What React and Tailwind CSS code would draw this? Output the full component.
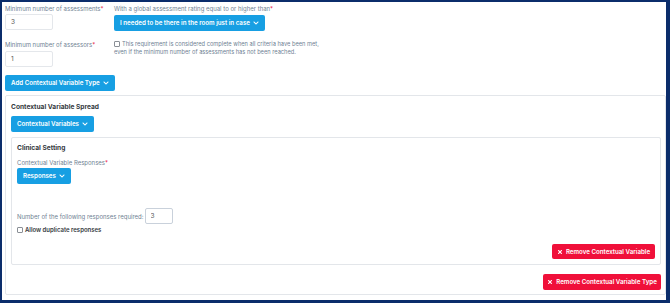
import { FaChevronDown, FaTimes } from 'react-icons/fa';

const BlueButton = ({ children, className = '' }) => (
    <button className={`flex items-center gap-[3px] bg-[#179fe3] text-white font-semibold text-[6.2px] whitespace-nowrap rounded-[2px] h-4 px-[6px] ${className}`}>
        {children}
        <FaChevronDown className="w-[6px] h-[6px]" />
    </button>
);

const RedButton = ({ children, className = '' }) => (
    <button className={`flex items-center justify-center gap-[3px] bg-[#f0103a] text-white font-semibold text-[6.2px] whitespace-nowrap rounded-[2px] ${className}`}>
        <FaTimes className="w-[6px] h-[6px]" />
        {children}
    </button>
);

const Label = ({ children, required }) => (
    <div className="text-[6px] leading-[9px] text-[#6f7f93] whitespace-nowrap">
        {children}
        {required && <span className="text-[#e8123c]">*</span>}
    </div>
);

const Box = () => (
    <span className="inline-block w-[6px] h-[6px] border border-[#8a8f96] rounded-[1px] bg-white shrink-0" />
);

export default function App() {
    return (
        <div className="w-[670px] h-[303px] bg-white border-t-2 border-l-2 border-r-4 border-b-[3px] border-[#0b2d6b] font-['Inter',sans-serif] overflow-hidden">
            <div className="pl-[3px] pt-[2px]">
                {/* Top requirement fields */}
                <div className="flex">
                    <div className="w-[109px] shrink-0">
                        <Label required>Minimum number of assessments</Label>
                        <input
                            readOnly
                            value="3"
                            className="block mt-[1px] w-12 h-4 border border-[#e4e7eb] rounded-[2px] text-[6.5px] px-[5px] text-[#555]"
                        />
                        <div className="mt-[10px]">
                            <Label required>Minimum number of assessors</Label>
                        </div>
                        <input
                            readOnly
                            value="1"
                            className="block mt-[2px] w-12 h-4 border border-[#e4e7eb] rounded-[2px] text-[6.5px] px-[5px] text-[#555]"
                        />
                    </div>
                    <div>
                        <Label required>With a global assessment rating equal to or higher than</Label>
                        <BlueButton className="mt-[2px]">I needed to be there in the room just in case</BlueButton>
                        <div className="mt-[9px] text-[5.7px] leading-[8px] text-[#6f7f93] whitespace-nowrap">
                            <div className="flex items-center gap-[2px]">
                                <Box />
                                This requirement is considered complete when all criteria have been met,
                            </div>
                            <div>even if the minimum number of assessments has not been reached.</div>
                        </div>
                    </div>
                </div>

                <BlueButton className="mt-[8px]">Add Contextual Variable Type</BlueButton>

                {/* Contextual variable spread panel */}
                <div className="mt-[4px] w-[661px] h-[200px] border border-[#e3e6ea] rounded-[2px] pl-[5px] pr-[4px] pt-[7px] flex flex-col">
                    <div className="text-[6.6px] font-bold text-[#343a40] leading-[9px]">Contextual Variable Spread</div>
                    <BlueButton className="mt-[4px] w-fit">Contextual Variables</BlueButton>
                    <div className="mt-[5px] h-[128px] border border-[#e3e6ea] rounded-[2px] pl-[5px] pr-[5px] pt-[6px] flex flex-col">
                        <div className="text-[6.6px] font-bold text-[#343a40] leading-[9px]">Clinical Setting</div>
                        <div className="mt-[5px]">
                            <Label required>Contextual Variable Responses</Label>
                        </div>
                        <BlueButton className="mt-[1px] w-fit">Responses</BlueButton>
                        <div className="mt-[24px] flex items-center gap-[1px]">
                            <span className="text-[6px] text-[#6f7f93] whitespace-nowrap">Number of the following responses required:</span>
                            <input
                                readOnly
                                value="3"
                                className="w-7 h-4 border border-[#c9d1db] rounded-[2px] text-[6.5px] px-[5px] text-[#555]"
                            />
                        </div>
                        <div className="mt-[1px] h-[9px] flex items-center gap-[2px] text-[6px] font-semibold text-[#343a40] whitespace-nowrap">
                            <Box />
                            Allow duplicate responses
                        </div>
                        <RedButton className="self-end mt-[10px] h-[15px] w-[103px]">Remove Contextual Variable</RedButton>
                    </div>
                    <RedButton className="self-end mt-[9px] h-4 w-[118px]">Remove Contextual Variable Type</RedButton>
                </div>
            </div>
        </div>
    );
}
